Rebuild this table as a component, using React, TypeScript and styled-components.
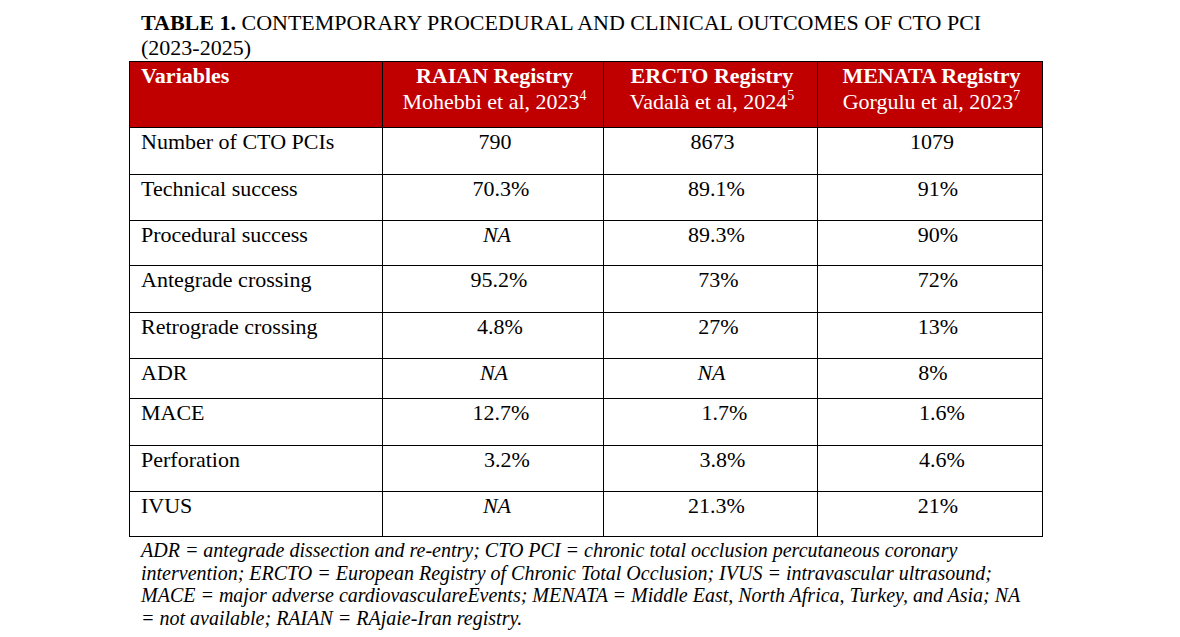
import styled, { createGlobalStyle } from 'styled-components';

const GlobalStyle = createGlobalStyle`
  html, body {
    margin: 0;
    padding: 0;
    background: #fff;
  }
  body {
    font-family: "Liberation Serif", "Times New Roman", serif;
    color: #000;
  }
`;

type Cell = { text: string; shift?: number; italic?: boolean };
type Row = { label: string; height: number; cells: Cell[] };

const headers = [
  { name: 'RAIAN Registry', cite: 'Mohebbi et al, 2023', ref: '4' },
  { name: 'ERCTO Registry', cite: 'Vadalà et al, 2024', ref: '5' },
  { name: 'MENATA Registry', cite: 'Gorgulu et al, 2023', ref: '7' },
];

const rows: Row[] = [
  { label: 'Number of CTO PCIs', height: 47, cells: [{ text: '790' }, { text: '8673' }, { text: '1079' }] },
  { label: 'Technical success', height: 46, cells: [{ text: '70.3%', shift: 6 }, { text: '89.1%', shift: 4 }, { text: '91%', shift: 6 }] },
  { label: 'Procedural success', height: 45, cells: [{ text: 'NA', italic: true, shift: 2 }, { text: '89.3%', shift: 4 }, { text: '90%', shift: 6 }] },
  { label: 'Antegrade crossing', height: 47, cells: [{ text: '95.2%', shift: 4 }, { text: '73%', shift: 6 }, { text: '72%', shift: 6 }] },
  { label: 'Retrograde crossing', height: 46, cells: [{ text: '4.8%', shift: 5 }, { text: '27%', shift: 6 }, { text: '13%', shift: 6 }] },
  { label: 'ADR', height: 40, cells: [{ text: 'NA', italic: true, shift: -1 }, { text: 'NA', italic: true, shift: -1 }, { text: '8%', shift: 1 }] },
  { label: 'MACE', height: 47, cells: [{ text: '12.7%', shift: 6 }, { text: '1.7%', shift: 12 }, { text: '1.6%', shift: 10 }] },
  { label: 'Perforation', height: 46, cells: [{ text: '3.2%', shift: 12 }, { text: '3.8%', shift: 10 }, { text: '4.6%', shift: 10 }] },
  { label: 'IVUS', height: 45, cells: [{ text: 'NA', italic: true, shift: 2 }, { text: '21.3%', shift: 4 }, { text: '21%', shift: 6 }] },
];

const App = () => {
  return (
    <Page>
      <GlobalStyle />
      <Figure>
        <Title>
          <TitleLead>TABLE 1.</TitleLead> CONTEMPORARY PROCEDURAL AND CLINICAL OUTCOMES OF CTO PCI
          <br />
          (2023-2025)
        </Title>
        <Table>
          <colgroup>
            <col style={{ width: 253 }} />
            <col style={{ width: 221 }} />
            <col style={{ width: 214 }} />
            <col style={{ width: 225 }} />
          </colgroup>
          <thead>
            <tr>
              <HeadCell $align='left'>
                <HeadName>Variables</HeadName>
              </HeadCell>
              {headers.map((h) => (
                <HeadCell key={h.name} $align='center'>
                  <HeadName>{h.name}</HeadName>
                  <br />
                  {h.cite}
                  <Sup>{h.ref}</Sup>
                </HeadCell>
              ))}
            </tr>
          </thead>
          <tbody>
            {rows.map((r) => (
              <BodyRow key={r.label} $height={r.height}>
                <LabelCell>{r.label}</LabelCell>
                {r.cells.map((c, i) => (
                  <ValueCell key={i} $shift={c.shift ?? 0} $italic={!!c.italic}>
                    {c.text}
                  </ValueCell>
                ))}
              </BodyRow>
            ))}
          </tbody>
        </Table>
        <Caption>
          ADR = antegrade dissection and re-entry; CTO PCI = chronic total occlusion percutaneous coronary
          <br />
          intervention; ERCTO = European Registry of Chronic Total Occlusion; IVUS = intravascular ultrasound;
          <br />
          MACE = major adverse cardiovasculareEvents; MENATA = Middle East, North Africa, Turkey, and Asia; NA
          <br />= not available; RAIAN = RAjaie-Iran registry.
        </Caption>
      </Figure>
    </Page>
  );
};

export default App;

const Page = styled.div`
  padding: 10px 0 0 129px;
`;

const Figure = styled.div`
  width: 913px;
`;

const Title = styled.div`
  padding-left: 12px;
  font-size: 22px;
  line-height: 25px;
  height: 51px;
  white-space: nowrap;
`;

const TitleLead = styled.span`
  font-weight: 700;
`;

const Table = styled.table`
  width: 913px;
  border-collapse: collapse;
  table-layout: fixed;
  font-family: inherit;
  font-size: 22px;
  line-height: 26px;
`;

const HeadCell = styled.th<{ $align: 'left' | 'center' }>`
  height: 66px;
  box-sizing: border-box;
  background: #c00000;
  color: #fff;
  border: 1px solid #000;
  padding: 1px 8px 0 11px;
  vertical-align: top;
  text-align: ${(p) => p.$align};
  font-weight: 400;
  white-space: nowrap;
`;

const HeadName = styled.span`
  font-weight: 700;
`;

const Sup = styled.sup`
  font-size: 14px;
  line-height: 0;
  vertical-align: 9px;
`;

const BodyRow = styled.tr<{ $height: number }>`
  height: ${(p) => p.$height}px;
`;

const LabelCell = styled.td`
  border: 1px solid #000;
  padding: 1px 8px 0 11px;
  vertical-align: top;
  white-space: nowrap;
`;

const ValueCell = styled.td<{ $shift: number; $italic: boolean }>`
  border: 1px solid #000;
  padding: 1px ${(p) => (p.$shift < 0 ? -2 * p.$shift : 0) + 4}px 0 ${(p) => (p.$shift > 0 ? 2 * p.$shift : 0) + 8}px;
  vertical-align: top;
  text-align: center;
  white-space: nowrap;
  font-style: ${(p) => (p.$italic ? 'italic' : 'normal')};
`;

const Caption = styled.div`
  padding: 2px 0 0 12px;
  font-size: 20px;
  line-height: 22.7px;
  font-style: italic;
  white-space: nowrap;
`;
